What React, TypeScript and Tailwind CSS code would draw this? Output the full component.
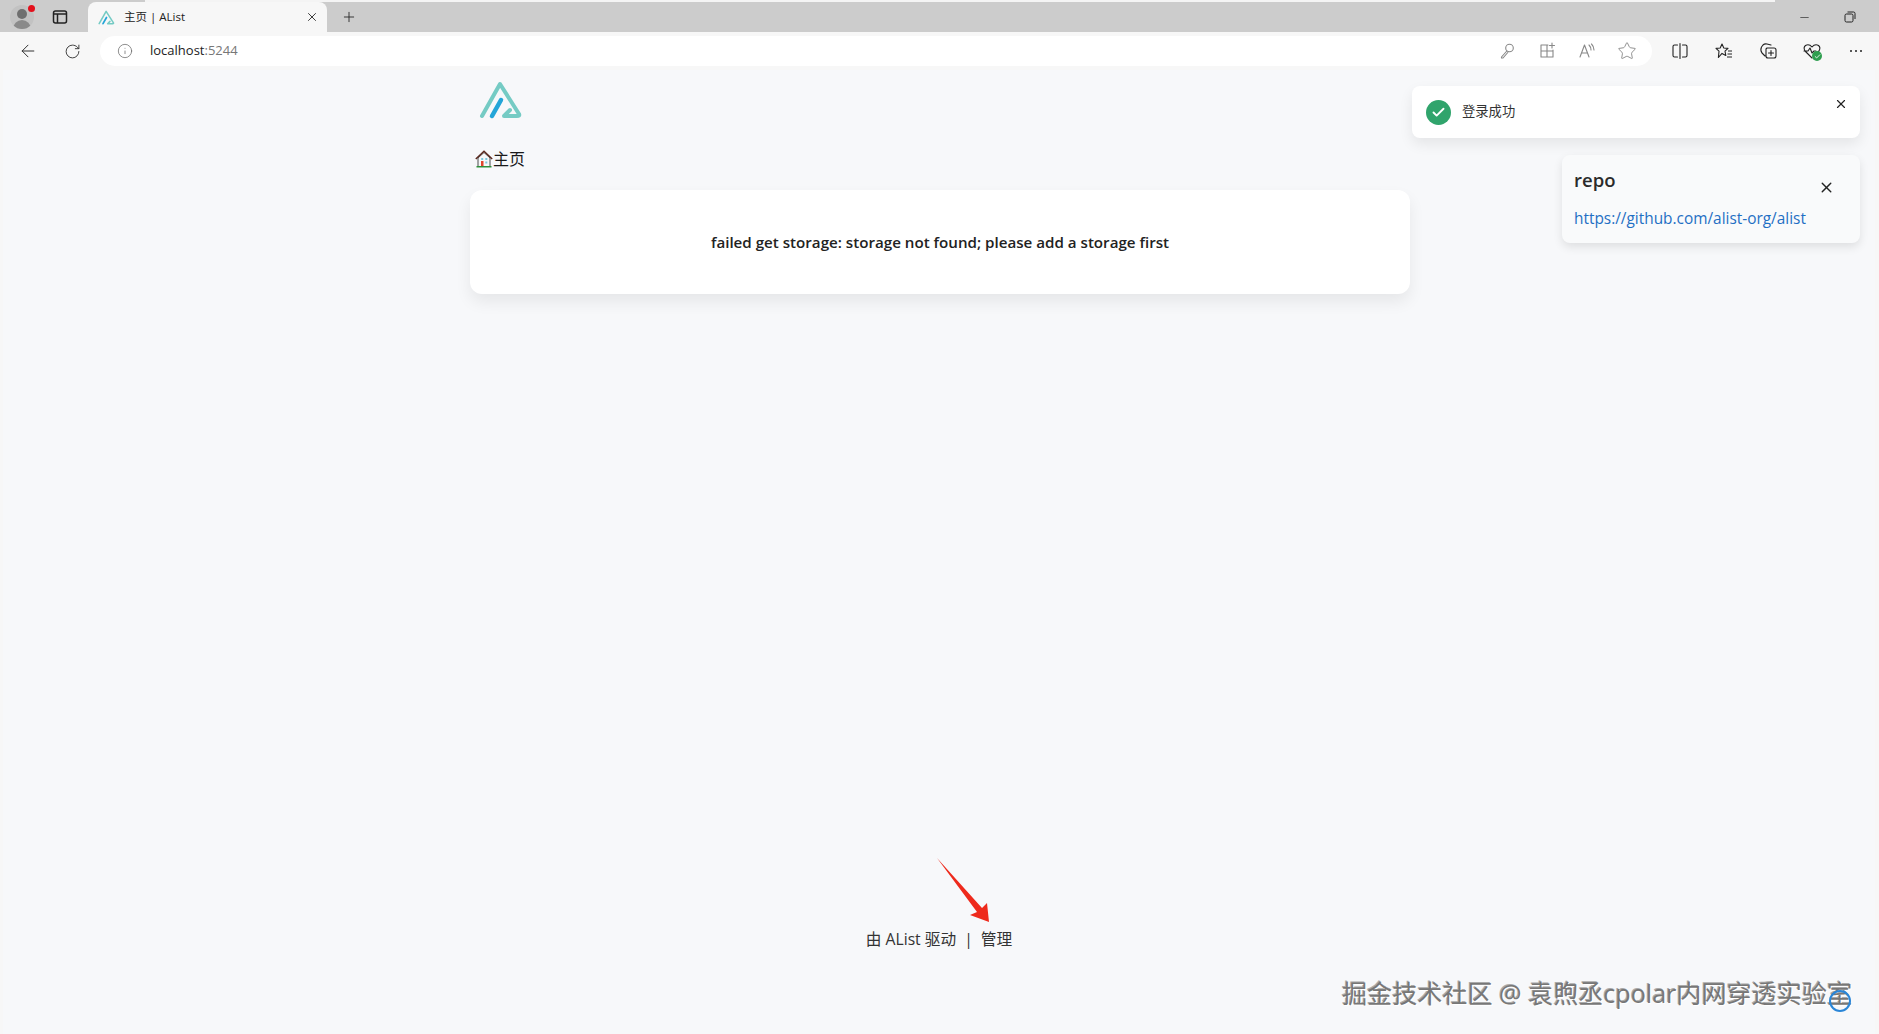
import { ArrowLeft, Check, Info, Minus, Plus, RotateCw, Star, X } from 'lucide-react';

const uiFont = "font-['Open_Sans','Noto_Sans_CJK_SC',sans-serif]";

function AlistLogo({ size }: { size: number }) {
  return (
    <svg width={size} height={size} viewBox="0 0 44 40" fill="none" strokeLinecap="round" strokeLinejoin="round">
      <path d="M3 36 L21 4 L40 34 Q41 36 38 36 L25 36 L31 30" stroke="#75cbc4" strokeWidth="4" />
      <path d="M13 36 L22 20" stroke="#23a5d8" strokeWidth="4.5" />
    </svg>
  );
}

function HouseEmoji() {
  return (
    <svg width="18" height="18" viewBox="0 0 18 18" className="shrink-0">
      <path d="M3 8 V16.5 H15 V8 L9 2.5 Z" fill="#f6f7f8" stroke="#222" strokeWidth="0.8" />
      <path d="M0.8 9 L9 1.2 L17.2 9" fill="none" stroke="#5b2a20" strokeWidth="1.5" />
      <rect x="1.5" y="16" width="15" height="1.5" fill="#2f8f3a" />
      <rect x="6" y="11" width="2.5" height="5" fill="#e2452b" />
      <rect x="10.3" y="8" width="2" height="2" fill="#7cc8de" />
      <rect x="10.3" y="11.5" width="2" height="2" fill="#7cc8de" />
      <rect x="6.2" y="8" width="2" height="2" fill="#7cc8de" />
    </svg>
  );
}

function ToolIcon({ children }: { children: React.ReactNode }) {
  return (
    <svg width="20" height="20" viewBox="0 0 20 20" fill="none" stroke="currentColor" strokeWidth="1.1" strokeLinecap="round" strokeLinejoin="round">
      {children}
    </svg>
  );
}

function BrowserChrome() {
  return (
    <header className="shrink-0">
      <div className="h-[32px] bg-[#cccccc] text-[#222]">
        <div className="ml-[145px] h-[2px] w-[1630px] bg-[#f4f4f4]" />
        <div className="flex h-[30px] items-center">
          <div className="flex w-[88px] items-center">
            <div className="relative ml-[10px] h-[24px] w-[24px] overflow-hidden rounded-full bg-[#c2c2c2]">
              <div className="mx-auto mt-[4px] h-[10px] w-[10px] rounded-full bg-[#6f6f6f]" />
              <div className="mx-auto mt-[1px] h-[10px] w-[18px] rounded-t-full bg-[#8a8a8a]" />
            </div>
            <div className="relative -ml-[6px] -mt-[18px] h-[7px] w-[7px] rounded-full bg-[#e3101c]" />
            <svg width="16" height="16" viewBox="0 0 16 16" fill="none" stroke="#222" strokeWidth="1.5" className="ml-[17px]">
              <rect x="1.5" y="2" width="13" height="12" rx="2" />
              <path d="M1.5 5 H14.5 M5.5 5 V14" />
            </svg>
          </div>
          <div className="flex h-[30px] w-[239px] items-center self-end rounded-t-[8px] bg-[#f7f7f7] pl-[10px] pr-[8px]">
            <AlistLogo size={17} />
            <span className={`ml-[9px] flex-1 text-[11.5px] text-[#222] ${uiFont}`}>主页 | AList</span>
            <X size={14} strokeWidth={1.5} />
          </div>
          <Plus size={16} strokeWidth={1.3} className="ml-[14px]" />
          <div className="ml-auto flex items-center">
            <Minus size={13} strokeWidth={1.2} />
            <svg width="12" height="12" viewBox="0 0 12 12" fill="none" stroke="#222" strokeWidth="1" className="ml-[33px] mr-[23px]">
              <rect x="1" y="3" width="8" height="8" rx="1.5" />
              <path d="M3.5 1 H9.5 Q11 1 11 2.5 V8" />
            </svg>
          </div>
        </div>
      </div>
      <div className="flex h-[38px] items-center bg-[#f7f7f7] text-[#333]">
        <ArrowLeft size={20} strokeWidth={1.2} className="ml-[18px]" />
        <RotateCw size={17} strokeWidth={1.3} className="ml-[26px]" />
        <div className="ml-[19px] flex h-[30px] w-[1552px] items-center rounded-full bg-white pl-[17px] pr-[15px]">
          <Info size={16} strokeWidth={1.1} className="text-[#666]" />
          <span className={`ml-[17px] text-[13px] ${uiFont}`}>
            <span className="text-[#222]">localhost</span>
            <span className="text-[#777]">:5244</span>
          </span>
          <div className="ml-auto flex items-center gap-[20px] text-[#888]">
            <ToolIcon>
              <circle cx="12.5" cy="7" r="3.8" />
              <path d="M9.8 10 L4.5 16 L4.5 17 L6 17 L10.8 11.5" />
            </ToolIcon>
            <ToolIcon>
              <path d="M11 4 H4 V16 H16 V9 M4 10 H16 M10 4 V16 M15 2 V7 M12.5 4.5 H17.5" />
            </ToolIcon>
            <ToolIcon>
              <path d="M3 16 L7.5 4 L12 16 M4.6 12 H10.4 M12 4 Q14 6 14 9 M14.5 3 Q17 5.5 17 9" />
            </ToolIcon>
            <Star size={20} strokeWidth={1.1} />
          </div>
        </div>
        <div className="ml-[18px] flex items-center gap-[24px] text-[#222]">
          <ToolIcon>
            <path d="M7.5 4 H4.5 Q3 4 3 5.5 V14.5 Q3 16 4.5 16 H7.5 M12.5 4 H15.5 Q17 4 17 5.5 V14.5 Q17 16 15.5 16 H12.5 M10 2.5 V17.5" />
          </ToolIcon>
          <svg width="20" height="20" viewBox="0 0 20 20" fill="none" stroke="currentColor" strokeWidth="1.1" strokeLinejoin="round">
            <path d="M8 3 L9.8 7 L14 7.4 L11 10.2 L11.8 14.5 L8 12.4 L4.4 16.5 L5 10.2 L2 7.4 L6.2 7 Z" />
            <path d="M14 10 H18 M13.5 13 H18 M13 16 H18" />
          </svg>
          <ToolIcon>
            <path d="M7 15 L4 12 Q2 9 3.5 6 L5 4 Q6.5 2.5 9 3 L13 4 M9 7 H16 Q18 7 18 9 V15 Q18 17 16 17 H10 Q8 17 8 15 V8 Z M13 9.5 V14.5 M10.5 12 H15.5" />
          </ToolIcon>
          <div className="relative h-[20px] w-[20px]">
            <ToolIcon>
              <path d="M10 17 L3 10 Q1 6.5 3.5 4.5 Q7 2.5 10 6 Q13 2.5 16.5 4.5 Q19 6.5 17 10 L15 12 M2 10 H6 L8 7 L10 12 L12 10 H14" />
            </ToolIcon>
            <div className="absolute bottom-0 right-0 flex h-[10px] w-[10px] items-center justify-center rounded-full bg-[#2e9e4f]">
              <Check size={7} strokeWidth={3} className="text-white" />
            </div>
          </div>
          <div className="ml-[4px] flex gap-[3px]">
            <div className="h-[2px] w-[2px] rounded-full bg-[#222]" />
            <div className="h-[2px] w-[2px] rounded-full bg-[#222]" />
            <div className="h-[2px] w-[2px] rounded-full bg-[#222]" />
          </div>
        </div>
      </div>
    </header>
  );
}

export default function App() {
  return (
    <div className={`flex h-screen flex-col overflow-hidden bg-[#f7f7f7] ${uiFont}`}>
      <BrowserChrome />
      <main className="relative mx-[3px] mr-[4px] flex flex-1 flex-col items-center bg-[#f7f8fa]">
        <div className="ml-[2px] w-[940px] flex-1">
          <div className="ml-[9px] pt-[8px]">
            <AlistLogo size={44} />
          </div>
          <div className="ml-[5px] mt-[25px] flex h-[24px] items-center text-[16px] text-[#1a1a1a]">
            <HouseEmoji />
            <span>主页</span>
          </div>
          <div className="mt-[19px] flex h-[104px] items-center justify-center rounded-[12px] bg-white shadow-[0_8px_16px_rgba(0,0,0,0.07)]">
            <p className="text-[15.15px] font-semibold text-[#222]">
              failed get storage: storage not found; please add a storage first
            </p>
          </div>
        </div>
        <footer className="mb-[82px] flex items-center gap-[8px] text-[15.7px] text-[#333]">
          <span>由 AList 驱动</span>
          <span>|</span>
          <span>管理</span>
        </footer>

        {/* toasts */}
        <div className="absolute right-[15px] top-[16px] flex flex-col items-end gap-[17px]">
          <div className="relative flex h-[52px] w-[448px] items-center rounded-[8px] bg-white pl-[14px] shadow-[0_6px_14px_rgba(0,0,0,0.08)]">
            <div className="flex h-[25px] w-[25px] items-center justify-center rounded-full bg-[#30a46c]">
              <Check size={15} strokeWidth={3} className="text-white" />
            </div>
            <span className="ml-[11px] text-[13.3px] text-[#333]">登录成功</span>
            <X size={14} strokeWidth={2} className="absolute right-[12px] top-[11px] text-[#222]" />
          </div>
          <div className="relative h-[88px] w-[298px] rounded-[8px] bg-[#f9fafb] pl-[12px] pt-[12px] shadow-[0_4px_10px_rgba(0,0,0,0.1)]">
            <p className="text-[18.5px] font-semibold leading-[25px] text-[#2b2b2b]">repo</p>
            <p className="mt-[16px] text-[15.4px] leading-[22px] text-[#1f6fc4]">https://github.com/alist-org/alist</p>
            <X size={17} strokeWidth={2} className="absolute right-[25px] top-[24px] text-[#222]" />
          </div>
        </div>

        {/* annotation arrow */}
        <svg width="60" height="70" viewBox="0 0 60 70" className="absolute left-[932px] top-[787px]">
          <path d="M2 1 L47 51 L52 46 L54 65 L35 58 L42 55 Z" fill="#ee2a1c" />
        </svg>

        {/* watermark */}
        <div className="absolute bottom-[24px] right-[23px] text-[25.1px] leading-[34px] text-[#777] [text-shadow:1px_1px_0_#fff,-1px_-1px_0_#aaa]">
          掘金技术社区 @ 袁煦丞cpolar内网穿透实验室
        </div>
        <div className="absolute bottom-[22px] right-[24px] h-[22px] w-[22px] rounded-full border-2 border-[#2a86d8]" />
      </main>
    </div>
  );
}
